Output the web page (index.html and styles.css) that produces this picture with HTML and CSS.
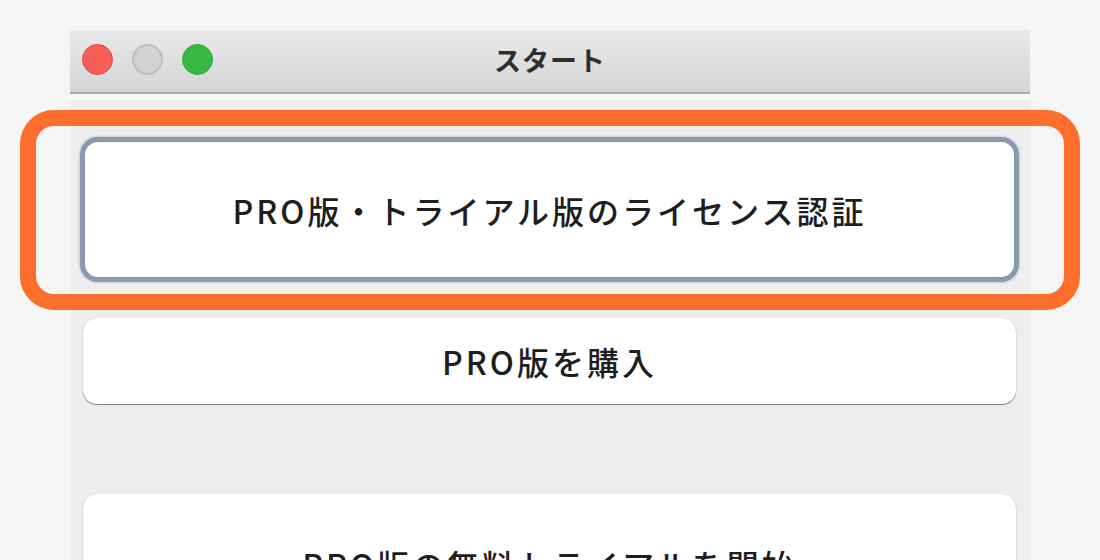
FILE: index.html
```html
<!DOCTYPE html>
<html lang="ja">
<head>
    <meta charset="UTF-8">
    <title>スタート</title>
    <link rel="stylesheet" href="styles.css">
</head>
<body>
<div class="stage">
    <div class="window">
        <div class="titlebar">
            <div class="lights">
                <span class="light red"></span>
                <span class="light gray"></span>
                <span class="light green"></span>
            </div>
            <div class="title">スタート</div>
            <div></div>
        </div>
        <div class="content">
            <button class="start-btn focused">PRO版・トライアル版のライセンス認証</button>
            <button class="start-btn short">PRO版を購入</button>
            <button class="start-btn trial">PRO版の無料トライアルを開始</button>
        </div>
    </div>
    <div class="highlight"></div>
</div>
</body>
</html>
```

FILE: styles.css
```css
body {
    margin: 0;
    background: #f5f5f3;
    font-family: "Noto Sans CJK JP", "Noto Sans", sans-serif;
    overflow: hidden;
}

.stage {
    position: relative;
    width: 1100px;
    height: 560px;
    padding-top: 30px;
    box-sizing: border-box;
    overflow: hidden;
}

.window {
    width: 960px;
    margin-left: 70px;
    background: #eeeeee;
}

.titlebar {
    height: 62px;
    display: grid;
    grid-template-columns: 1fr auto 1fr;
    align-items: center;
    background: linear-gradient(#e9e9e9, #d5d5d5);
    border-bottom: 2px solid #a9a9a9;
}

.lights {
    display: flex;
    gap: 19px;
    padding-left: 12px;
    margin-top: -4px;
}

.light {
    width: 31px;
    height: 31px;
    border-radius: 50%;
    box-sizing: border-box;
}

.light.red {
    background: #f55f57;
    border: 1px solid #e0443e;
}

.light.gray {
    background: #d2d2d2;
    border: 2px solid #bdbdbd;
}

.light.green {
    background: #38b844;
    border: 1px solid #2ea83a;
}

.title {
    font-size: 27px;
    font-weight: 700;
    color: #2e2e2e;
    letter-spacing: 1px;
    margin-top: -4px;
}

.content {
    border-top: 6px solid #f8f8f8;
    padding: 40px 14px 0 13px;
    display: flex;
    flex-direction: column;
    height: 460px;
}

.start-btn {
    font-family: inherit;
    font-size: 32px;
    font-weight: 500;
    color: #1e1e1e;
    letter-spacing: 3px;
    background: #fff;
    border: none;
    border-radius: 14px;
    box-shadow: 0 1px 1px rgba(0,0,0,0.45), 0 0 1px rgba(0,0,0,0.25);
    flex-shrink: 0;
}

.start-btn.focused {
    height: 139px;
    border: 2px solid #8799ae;
    box-shadow: 0 0 0 3px #8a9bb0, 0 0 2px 4px rgba(138,155,176,0.4);
    border-radius: 15px;
}

.start-btn.short {
    height: 86px;
    margin-top: 39px;
}

.start-btn.trial {
    height: 140px;
    margin-top: 90px;
}

.highlight {
    position: absolute;
    left: 20px;
    top: 110px;
    width: 1060px;
    height: 200px;
    box-sizing: border-box;
    border: 16px solid #fd6d2c;
    border-radius: 34px;
    pointer-events: none;
}
```
